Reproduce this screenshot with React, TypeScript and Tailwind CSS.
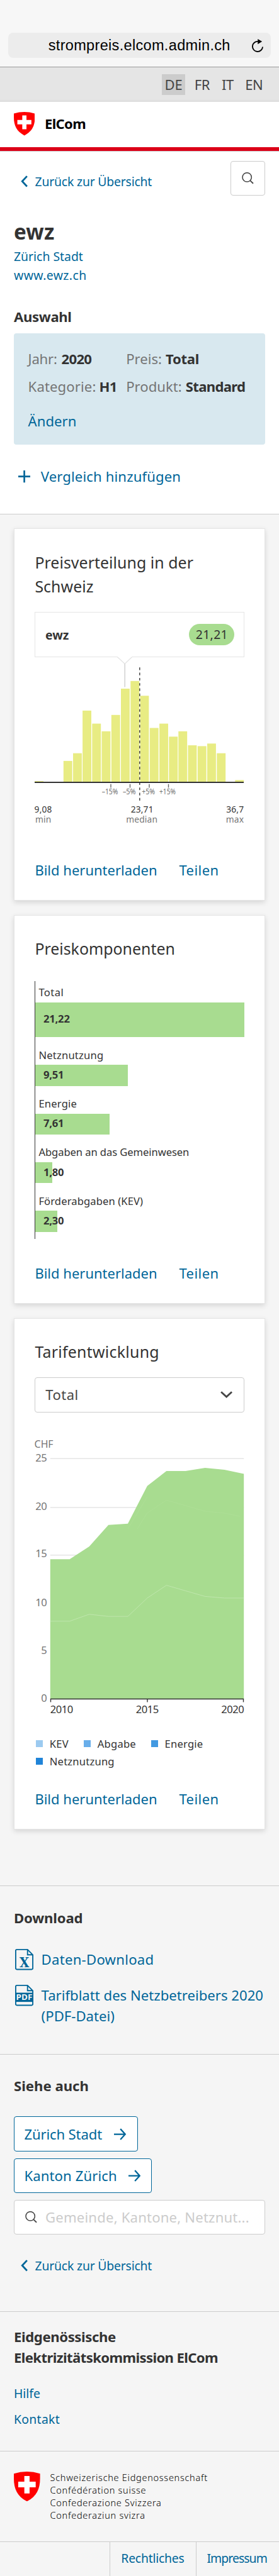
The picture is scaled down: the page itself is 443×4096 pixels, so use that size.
import type { ReactNode } from "react";

function ChevronLeft() {
  return (
    <svg viewBox="0 0 39 66" className="h-[18.6px] w-[11px] shrink-0" fill="none" stroke="#006699" strokeWidth="10">
      <path d="M35 4 8 33l27 29" />
    </svg>
  );
}

function SearchIcon() {
  return (
    <svg viewBox="0 0 66 66" className="size-[18.6px] shrink-0" fill="none" stroke="#454545" strokeWidth="5.5">
      <circle cx="29" cy="28" r="25.5" />
      <path d="m46 46 18 17" strokeWidth="6.5" />
    </svg>
  );
}

function ArrowRight() {
  return (
    <svg viewBox="0 0 68 68" className="size-[19.2px] shrink-0" fill="none" stroke="#006699" strokeWidth="8">
      <path d="M0 34h62M36 4l27 30-27 30" />
    </svg>
  );
}

function Shield({ className }: { className: string }) {
  return (
    <svg viewBox="0 0 180 204" preserveAspectRatio="none" className={className}>
      <path d="M0 14Q90-13 180 14v34c0 70-24 122-90 156C24 170 0 118 0 48z" fill="#ff0000" />
      <path d="M72 30h36v39h42v39h-42v42H72v-42H30V69h42z" fill="#fff" />
    </svg>
  );
}

function DocIcon({ children }: { children: ReactNode }) {
  return (
    <svg viewBox="0 0 125 144" className="h-[33.4px] w-[29px] shrink-0">
      <path
        d="M12 4h73l36 36v92a8 8 0 0 1-8 8H12a8 8 0 0 1-8-8V12a8 8 0 0 1 8-8zM85 4v36h36"
        fill="none"
        stroke="#006699"
        strokeWidth="8"
      />
      {children}
    </svg>
  );
}

function BackLink({ className }: { className: string }) {
  return (
    <a className={`flex items-center gap-[11.3px] text-[19.4px] leading-[27px] tracking-[-0.2px] text-[#006699] ${className}`}>
      <ChevronLeft />
      Zurück zur Übersicht
    </a>
  );
}

function CardLinks({ className }: { className: string }) {
  return (
    <div className={`flex text-[22px] leading-[33px] text-[#006699] ${className}`}>
      <a className="w-[229px]">Bild herunterladen</a>
      <a className="tracking-[0.45px]">Teilen</a>
    </div>
  );
}

function Card({ className, children }: { className: string; children: ReactNode }) {
  return (
    <section
      className={`border border-[#e5e5e5] bg-white px-[32.4px] shadow-[0_3px_8px_rgba(0,0,0,0.13)] ${className}`}
    >
      {children}
    </section>
  );
}

const histogram = [
  [0, 198], [45.8, 165.9], [61, 153.7], [76.1, 85.9], [91.3, 106.6], [106.5, 118.8], [121.8, 92.8],
  [137, 51], [152.3, 38.8], [167.5, 62.3], [182.8, 113.5], [198.1, 106.6], [213.3, 127.3], [228.3, 118.8],
  [243.5, 141.1], [258.8, 142.4], [274, 138.3], [289.3, 153.7], [318.3, 196.4],
];

function Histogram() {
  return (
    <svg viewBox="0 0 332.2 268" className="-mt-px block h-[268px] w-[332.2px] overflow-visible">
      <path d="M131 .2 143.2 11.6 155 .2" fill="#fff" stroke="#e5e5e5" strokeWidth="1.4" />
      <path d="M132 0h22" stroke="#fff" strokeWidth="1.6" />
      {histogram.map(([x, y]) => (
        <rect key={x} x={x} y={y} width="13.9" height={199.6 - y} fill="#e8ec83" />
      ))}
      <path d="M143.2 11.6v36.8" stroke="#cdcdcd" strokeWidth="1.4" />
      <rect x="0" y="199.3" width="332.2" height="1.3" fill="#333" shapeRendering="crispEdges" />
      <path d="M166.8 17.3v212" stroke="#333" strokeWidth="1.4" strokeDasharray="4.15 4.15" />
      <path d="M121 202.8v5.8M151.5 202.8v5.8M182 202.8v5.8M212.5 202.8v5.8" stroke="#666" strokeWidth="1.4" />
      <g fontSize="12" fill="#707070" textAnchor="middle">
        <text x="119.6" y="218.6" textLength="25.6" lengthAdjust="spacingAndGlyphs">–15%</text>
        <text x="150.2" y="218.6" textLength="20.6" lengthAdjust="spacingAndGlyphs">–5%</text>
        <text x="180.7" y="218.6" textLength="20.8" lengthAdjust="spacingAndGlyphs">+5%</text>
        <text x="211" y="218.6" textLength="25.8" lengthAdjust="spacingAndGlyphs">+15%</text>
      </g>
      <g fontSize="13.8" fill="#333" letterSpacing="0.15">
        <text x="-0.4" y="248">9,08</text>
        <text x="170.7" y="248" textAnchor="middle">23,71</text>
        <text x="332.2" y="248" textAnchor="end">36,7</text>
        <g fill="#757575">
          <text x="13.8" y="264.3" textAnchor="middle">min</text>
          <text x="170.2" y="264.3" textAnchor="middle">median</text>
          <text x="332.2" y="264.3" textAnchor="end">max</text>
        </g>
      </g>
    </svg>
  );
}

function PriceBar({ label, value, bar, labelClass }: { label: string; value: string; bar: string; labelClass: string }) {
  return (
    <div>
      <div className={`mb-[4.8px] pl-[5px] leading-[22px] ${labelClass}`}>{label}</div>
      <div className={`flex items-center bg-[#a8dc90] pl-[12.6px] font-bold tracking-[-0.2px] ${bar}`}>
        <span className="-mt-[2px] leading-[22px]">{value}</span>
      </div>
    </div>
  );
}

const yTicks = [
  { v: "25", t: 39.4 },
  { v: "20", t: 115.7 },
  { v: "15", t: 191.4 },
  { v: "10", t: 269 },
  { v: "5", t: 345 },
  { v: "0", t: 421.3 },
];

function AreaChart() {
  return (
    <svg viewBox="0 0 332.2 450" className="mt-[39.4px] block h-[450px] w-[332.2px] overflow-visible" fontSize="16.6">
      <g fill="#757575">
        <text x="-0.4" y="17.3" textLength="30" lengthAdjust="spacingAndGlyphs">CHF</text>
        {yTicks.map((k) => (
          <text key={k.v} x="19.3" y={k.t} textAnchor="end" letterSpacing="-0.5">{k.v}</text>
        ))}
      </g>
      <path d="M24.8 34.3h307.4M24.8 112h307.4M24.8 187.7h307.4" stroke="#e5e5e5" strokeWidth="1.4" />
      <path
        d="M24.8 194.2H55.6L86.7 174.1 117.2 139.7 148 137.7 178.8 77.8 209.3 54.1H239.6L270.6 49 301.4 52.1 332.2 58.6V416.2H24.8z"
        fill="#a8dc90"
      />
      <path
        d="M24.8 292.8H55.6L86.7 281.8 117.2 285.2H148L178.8 256 209.3 235.7 239.6 244.5 270.6 253.4 301.4 256H332.2"
        fill="none"
        stroke="#c5e8b4"
        strokeWidth="0.8"
      />
      <path
        d="M148 146 178.8 95M163 146 178.8 120.7 209.3 100.4 239.6 109 270.6 118 301.4 121 326 126"
        fill="none"
        stroke="#b2e09c"
        strokeWidth="0.5"
      />
      <path d="M25.5 421.4v-4.9h306v4.9M179 416.5v4.9" fill="none" stroke="#333" strokeWidth="1.4" />
      <g fill="#333" letterSpacing="-0.5">
        <text x="24.8" y="439.4">2010</text>
        <text x="178.8" y="439.4" textAnchor="middle">2015</text>
        <text x="332.2" y="439.4" textAnchor="end">2020</text>
      </g>
    </svg>
  );
}

function Legend({ label, swatch, className = "" }: { label: string; swatch: string; className?: string }) {
  return (
    <div className={`flex items-center gap-[11px] ${className}`}>
      <span className={`size-[11px] shrink-0 ${swatch}`} />
      <span className="tracking-[0.2px]">{label}</span>
    </div>
  );
}

export default function App() {
  return (
    <div className="flex h-[4096px] w-[443px] flex-col overflow-hidden bg-[#f5f5f5] font-['Noto_Sans',sans-serif] text-[#333]">
      <div className="h-[107.2px] shrink-0 border-b border-[#999] bg-[#f7f7f7] px-[13.3px] pt-[52px]">
        <div className="flex h-[40px] items-center rounded-[8px] bg-[#ececec] pl-[63.4px] pr-[11.6px] font-['Liberation_Sans',sans-serif] text-[23.5px] text-black">
          <span className="tracking-[0.33px] leading-[38px]">strompreis.elcom.admin.ch</span>
          <svg viewBox="0 0 78 91" className="ml-auto h-[21px] w-[18px]">
            <path d="M42 17A35 35 0 1 0 74 54" fill="none" stroke="#000" strokeWidth="8" />
            <path d="M40 0 70 17 40 36z" />
          </svg>
        </div>
      </div>

      <nav className="flex h-[54.8px] shrink-0 items-center justify-end gap-[11px] bg-[#e5e5e5] pr-[22px] text-center text-[22px] leading-[33.4px] text-[#454545] shadow-[inset_0_-5px_4px_-4px_rgba(0,0,0,0.06)]">
        <a className="w-[36.2px] bg-[#ccc] tracking-[-0.2px]">DE</a>
        <a className="w-[32.6px] tracking-[-0.4px]">FR</a>
        <a className="w-[26.4px] tracking-[-0.4px]">IT</a>
        <a className="w-[35.4px] tracking-[-0.4px]">EN</a>
      </nav>

      <header className="flex h-[79px] shrink-0 items-center gap-[15.6px] border-b border-[#ccc] bg-white pb-[8px] pl-[22px] shadow-[inset_0_-6px_0_#dc0018]">
        <Shield className="h-[37.4px] w-[33.4px]" />
        <span className="text-[22px] leading-[33px] font-bold tracking-[-0.65px] text-black">ElCom</span>
      </header>

      <main className="h-[577.3px] shrink-0 border-b border-[#ccc] bg-white px-[22px] pt-[15px]">
        <div className="flex h-[55.4px] items-start justify-between">
          <BackLink className="mt-[19.2px] ml-[11.3px]" />
          <button className="flex size-[55.4px] items-center justify-center rounded-[4px] border border-[#ccc]">
            <SearchIcon />
          </button>
        </div>
        <h1 className="mt-[34.7px] text-[33.2px] leading-[46px] font-bold tracking-[0.2px]">ewz</h1>
        <div className="mt-[0.6px] text-[19.4px] leading-[30.2px] text-[#006699]">
          <div>Zürich Stadt</div>
          <div className="tracking-[0.4px]">www.ewz.ch</div>
        </div>
        <h2 className="mt-[34px] text-[22.15px] leading-[33px] font-bold tracking-[-0.35px]">Auswahl</h2>
        <div className="mt-[9.9px] h-[177.5px] rounded-[4px] bg-[#d8e8ef] px-[22.6px] pt-[18px] text-[22.15px]">
          <div className="grid grid-cols-[155.6px_1fr] leading-[44.3px] whitespace-nowrap text-[#757575]">
            <div className="flex gap-[7px]"><span className="tracking-[-0.25px]">Jahr:</span><b className="tracking-[-0.75px] text-[#333]">2020</b></div>
            <div className="flex gap-[6px]"><span>Preis:</span><b className="tracking-[-0.3px] text-[#333]">Total</b></div>
            <div className="flex gap-[5px]"><span className="tracking-[0.1px]">Kategorie:</span><b className="tracking-[-0.6px] text-[#333]">H1</b></div>
            <div className="flex gap-[6px]"><span>Produkt:</span><b className="tracking-[-0.7px] text-[#333]">Standard</b></div>
          </div>
          <a className="mt-[16.6px] block leading-[33px] text-[#006699]">Ändern</a>
        </div>
        <a className="mt-[34px] flex items-center gap-[16.4px] pl-[7.1px] text-[22.15px] leading-[33px] tracking-[0.12px] text-[#006699]">
          <svg viewBox="0 0 68 68" className="size-[19.2px]" stroke="#006699" strokeWidth="9.5">
            <path d="M34 0v68M0 34h68" />
          </svg>
          Vergleich hinzufügen
        </a>
      </main>

      <div className="h-[2180.2px] shrink-0 px-[22px] pt-[22.1px]">
        <Card className="h-[592.1px] pt-[33.2px]">
          <h3 className="text-[24.9px] leading-[38.8px] tracking-[0.05px]">Preisverteilung in der Schweiz</h3>
          <div className="mt-[21px] flex h-[71.8px] items-center justify-between border border-[#e5e5e5] pr-[14.2px] pl-[15.6px] text-[19.4px]">
            <b>ewz</b>
            <span className="h-[33.4px] w-[72.1px] rounded-full bg-[#a8dc90] text-center leading-[33px] tracking-[0.35px]">21,21</span>
          </div>
          <Histogram />
          <CardLinks className="mt-[55.2px]" />
        </Card>

        <Card className="mt-[22.7px] h-[618.2px] pt-[33.3px]">
          <h3 className="text-[24.9px] leading-[38.8px]">Preiskomponenten</h3>
          <div className="mt-[31.8px] flex h-[409.6px] flex-col gap-[17.4px] border-l-[1.4px] border-[#333] pt-[6.7px] text-[16.6px]">
            <PriceBar label="Total" value="21,22" bar="h-[55.6px] w-full" labelClass="tracking-[0.4px]" />
            <PriceBar label="Netznutzung" value="9,51" bar="h-[33.2px] w-[146.8px]" labelClass="tracking-[0.2px]" />
            <PriceBar label="Energie" value="7,61" bar="h-[33.2px] w-[117.6px]" labelClass="tracking-[0.2px]" />
            <PriceBar label="Abgaben an das Gemeinwesen" value="1,80" bar="h-[33.2px] w-[26.4px]" labelClass="tracking-[-0.08px]" />
            <PriceBar label="Förderabgaben (KEV)" value="2,30" bar="h-[33.2px] w-[34.6px]" labelClass="tracking-[0.1px]" />
          </div>
          <CardLinks className="mt-[38.8px]" />
        </Card>

        <Card className="mt-[22.4px] h-[813.7px] pt-[33.5px]">
          <h3 className="text-[24.9px] leading-[38.8px] tracking-[0.27px]">Tarifentwicklung</h3>
          <div className="mt-[21.1px] flex h-[55.4px] items-center justify-between rounded-[4px] border border-[#ccc] pr-[17.2px] pl-[15.8px] text-[22px] text-[#454545]">
            <span className="leading-[33px] tracking-[0.5px]">Total</span>
            <svg viewBox="0 0 68 38" className="h-[10.8px] w-[19.2px]" fill="none" stroke="#454545" strokeWidth="10">
              <path d="m4 4 30 28L64 4" />
            </svg>
          </div>
          <AreaChart />
          <div className="mt-[24px] flex flex-wrap gap-x-[23.5px] pl-[1.4px] text-[16.6px] leading-[27.7px]">
            <Legend label="KEV" swatch="bg-[#9ccaf0]" className="w-[52.5px]" />
            <Legend label="Abgabe" swatch="bg-[#69aeea]" className="w-[83.3px]" />
            <Legend label="Energie" swatch="bg-[#4299e1]" />
            <Legend label="Netznutzung" swatch="bg-[#2084d8]" />
          </div>
          <CardLinks className="mt-[30.1px]" />
        </Card>
      </div>

      <section className="h-[267.2px] shrink-0 border-t border-[#ccc] px-[22px] pt-[33.4px] text-[22.15px]">
        <h2 className="leading-[33px] font-bold tracking-[-0.15px]">Download</h2>
        <a className="mt-[33.4px] flex gap-[12.3px] pl-[2.3px] leading-[33.2px] tracking-[0.25px] text-[#006699]">
          <DocIcon>
            <text x="30" y="126" fontSize="100" fontWeight="700" fill="#006699" textLength="66" lengthAdjust="spacingAndGlyphs" fontFamily="DejaVu Serif, serif" letterSpacing="0">X</text>
          </DocIcon>
          Daten-Download
        </a>
        <a className="mt-[23.6px] flex gap-[12.3px] pl-[2.3px] leading-[33.2px] text-[#006699]">
          <DocIcon>
            <path d="M4 54h117v63H4z" fill="#006699" />
            <text x="7" y="105" fontSize="57" fontWeight="700" fill="#f5f5f5" textLength="111" lengthAdjust="spacingAndGlyphs">PDF</text>
          </DocIcon>
          <span className="whitespace-nowrap">Tarifblatt des Netzbetreibers 2020<br />(PDF-Datei)</span>
        </a>
      </section>

      <section className="h-[409.8px] shrink-0 border-t border-[#ccc] px-[22px] pt-[33.6px] text-[22.15px]">
        <h2 className="leading-[33px] font-bold">Siehe auch</h2>
        <a className="mt-[32.2px] flex h-[55.4px] w-[196.7px] items-center justify-between rounded-[4px] border border-[#006699] bg-white pr-[17.2px] pl-[15.4px] tracking-[-0.15px] text-[#006699]">
          Zürich Stadt
          <ArrowRight />
        </a>
        <a className="mt-[10.8px] flex h-[55.4px] w-[219px] items-center justify-between rounded-[4px] border border-[#006699] bg-white pr-[17.2px] pl-[15.4px] tracking-[0.1px] text-[#006699]">
          Kanton Zürich
          <ArrowRight />
        </a>
        <div className="mt-[11px] flex h-[55px] items-center gap-[13px] rounded-[4px] border border-[#ccc] bg-white pl-[17.4px] tracking-[0.17px] text-[#ccc]">
          <SearchIcon />
          Gemeinde, Kantone, Netznut...
        </div>
        <BackLink className="mt-[36px] ml-[11.3px]" />
      </section>

      <section className="h-[221.5px] shrink-0 border-t border-[#ccc] px-[22px] pt-[22.4px]">
        <h2 className="text-[22.15px] leading-[33.2px] font-bold tracking-[-0.62px]">
          <span className="tracking-[-0.4px]">Eidgenössische</span><br />Elektrizitätskommission ElCom
        </h2>
        <div className="mt-[20px] text-[19.4px] leading-[41px] text-[#006699]">
          <div>Hilfe</div>
          <div className="tracking-[0.3px]">Kontakt</div>
        </div>
      </section>

      <footer className="flex grow flex-col border-t border-[#ccc]">
        <div className="flex h-[142.8px] gap-[16px] pt-[30.6px] pl-[22px]">
          <Shield className="mt-[1.4px] h-[47.3px] w-[41.6px]" />
          <div className="text-[14.5px] leading-[20.3px] font-light tracking-[0.72px] text-black">
            Schweizerische Eidgenossenschaft<br />
            Confédération suisse<br />
            Confederazione Svizzera<br />
            Confederaziun svizra
          </div>
        </div>
        <div className="flex grow justify-end border-t border-[#ccc] text-[19.4px] leading-[52.5px] text-[#006699]">
          <a className="w-[136.2px] border-l border-[#ccc] pl-[17px] tracking-[-0.23px]">Rechtliches</a>
          <a className="w-[132.5px] border-l border-[#ccc] pl-[17px] tracking-[-0.95px]">Impressum</a>
        </div>
      </footer>
    </div>
  );
}
